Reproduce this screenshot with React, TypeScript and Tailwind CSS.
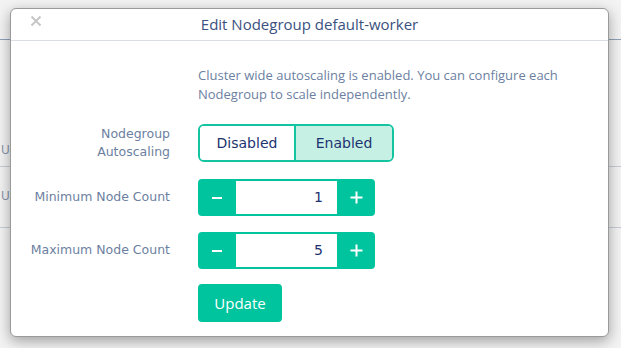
import React from "react";

const mont = { fontFamily: '"DejaVu Sans", "Noto Sans", sans-serif' };

function Stepper({ value }: { value: string }) {
  return (
    <div className="flex h-[37px] w-[177px] rounded-[4px] bg-[#00c49e] overflow-hidden">
      <button className="flex w-[38px] items-center justify-center text-white">
        <svg width="12" height="12" viewBox="0 0 12 12"><path d="M1 6h10" stroke="white" strokeWidth="2" /></svg>
      </button>
      <div className="flex flex-1 items-center justify-end bg-white my-[2px] pr-[14px] text-[14px] text-[#1d3370]" style={mont}>
        {value}
      </div>
      <button className="flex w-[38px] items-center justify-center text-white">
        <svg width="13" height="13" viewBox="0 0 13 13"><path d="M0.5 6.5h12M6.5 0.5v12" stroke="white" strokeWidth="2" /></svg>
      </button>
    </div>
  );
}

export default function App() {
  return (
    <div className="relative w-[621px] h-[348px] overflow-hidden bg-[#f3f3f3]" style={{ fontFamily: '"Open Sans", sans-serif' }}>
      {/* backdrop page */}
      <div className="absolute left-0 right-0 top-[39px] h-px bg-[#8fa0b8]" />
      <div className="absolute left-0 right-0 top-[166px] h-px bg-[#c8cdd5]" />
      <div className="absolute left-0 right-0 top-[227px] h-px bg-[#c8cdd5]" />
      <div className="absolute left-[1px] top-[141px] text-[12px] text-[#7d8aa3]">Us</div>
      <div className="absolute left-[1px] top-[187px] text-[12px] text-[#7d8aa3]">Us</div>

      {/* modal */}
      <div className="absolute left-[10px] top-[8px] w-[599px] h-[329px] rounded-[6px] bg-white border border-[#9a9a9a] shadow-[0_4px_14px_rgba(0,0,0,0.35)] flex flex-col">
        <div className="relative h-[32px] border-b border-[#dadde2] flex items-center justify-center">
          <span className="absolute left-[19px] top-[6px] text-[#c2c2c2]">
            <svg width="12" height="12" viewBox="0 0 12 12"><path d="M1.5 1.5l9 9M10.5 1.5l-9 9" stroke="#c6c6c6" strokeWidth="2" /></svg>
          </span>
          <span className="text-[15px] text-[#3b5180] -mt-[1px]">Edit Nodegroup default-worker</span>
        </div>
        <div className="flex flex-col pl-[187px] pt-[25px]">
          <p className="text-[13px] leading-[19px] text-[#6c7fa1]">
            Cluster wide autoscaling is enabled. You can configure each
            <br />
            Nodegroup to scale independently.
          </p>
        </div>
        <div className="flex flex-col mt-[20px]">
          <div className="flex items-center">
            <div className="w-[159px] text-right text-[12.5px] leading-[18px] text-[#6c7fa1]" style={mont}>
              Nodegroup
              <br />
              Autoscaling
            </div>
            <div className="ml-[28px] flex h-[38px] w-[196px] rounded-[6px] border-2 border-[#14c3a0] overflow-hidden text-[14px] text-[#1d3370]" style={mont}>
              <div className="flex flex-1 items-center justify-center bg-white border-r-2 border-[#14c3a0]">Disabled</div>
              <div className="flex w-[96px] items-center justify-center bg-[#c6f0e4]">Enabled</div>
            </div>
          </div>
          <div className="flex items-center mt-[17px]">
            <div className="w-[159px] text-right text-[12.5px] text-[#6c7fa1]" style={mont}>Minimum Node Count</div>
            <div className="ml-[28px]"><Stepper value="1" /></div>
          </div>
          <div className="flex items-center mt-[16px]">
            <div className="w-[159px] text-right text-[12.5px] text-[#6c7fa1]" style={mont}>Maximum Node Count</div>
            <div className="ml-[28px]"><Stepper value="5" /></div>
          </div>
          <div className="flex mt-[15px]">
            <button className="ml-[187px] h-[38px] w-[84px] rounded-[4px] bg-[#00c49e] text-white text-[15px]">Update</button>
          </div>
        </div>
      </div>
    </div>
  );
}
